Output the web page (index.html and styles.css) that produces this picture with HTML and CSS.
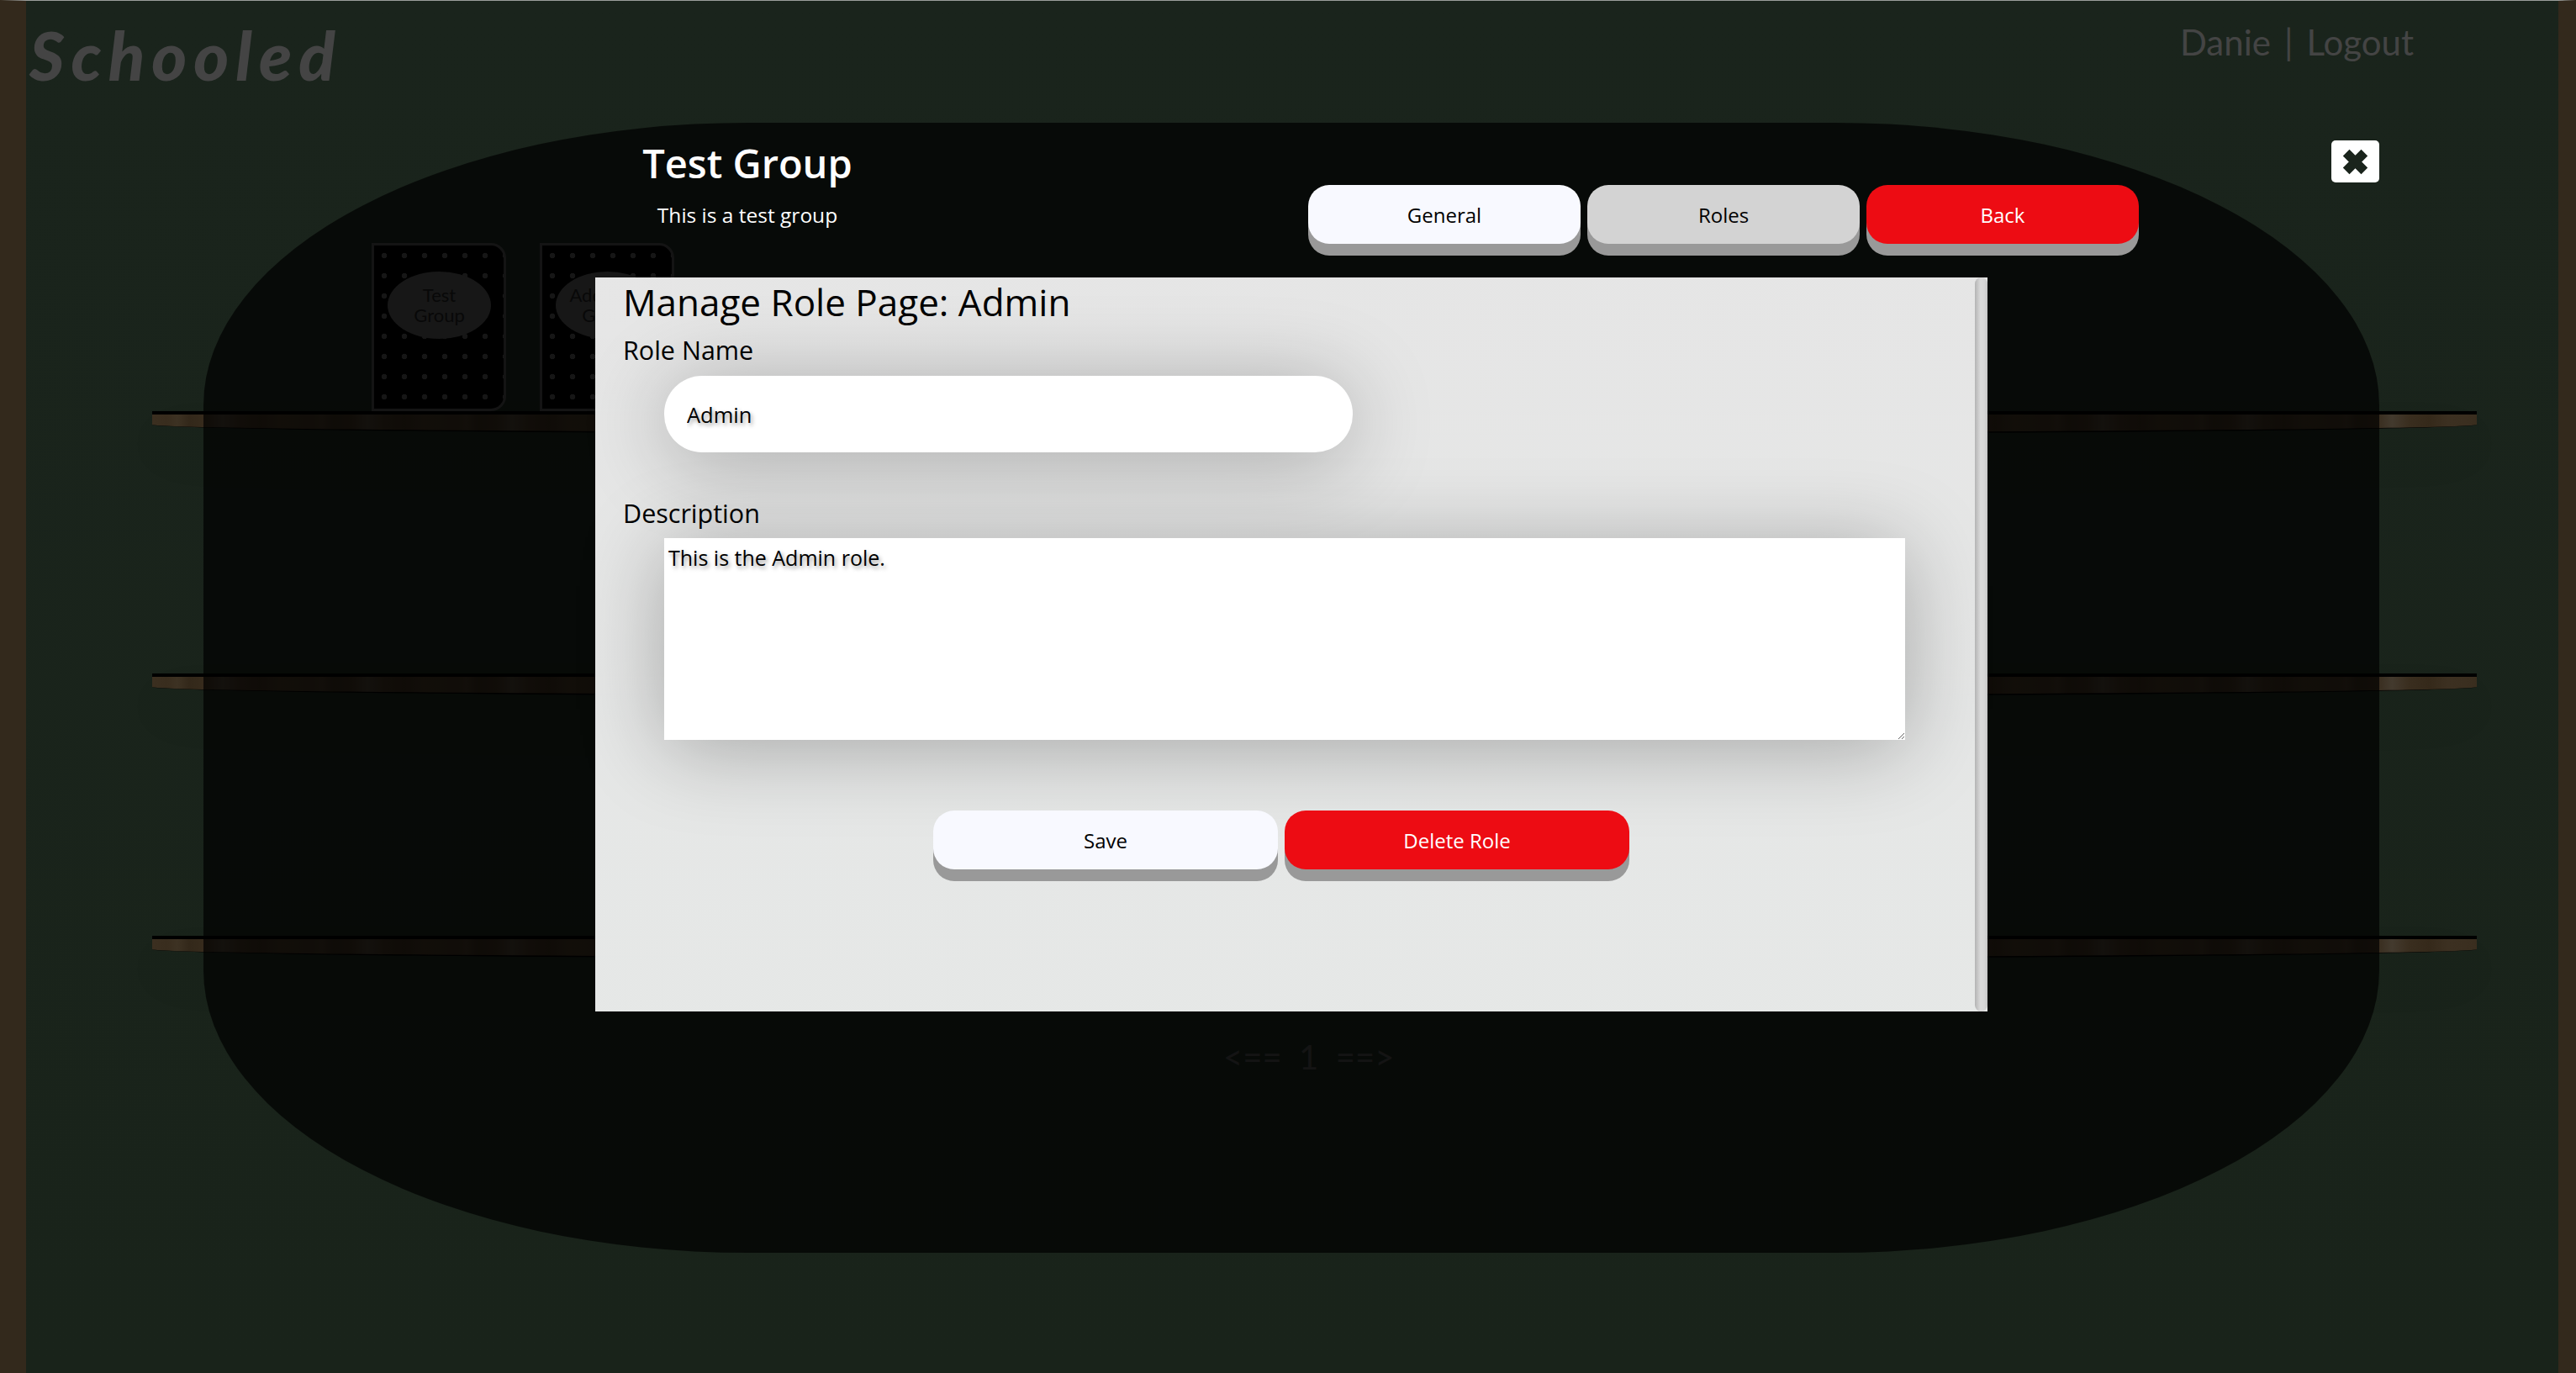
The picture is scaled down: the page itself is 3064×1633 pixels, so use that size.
FILE: index.html
```html
<!DOCTYPE html>
<html lang="en">

<head>
    <meta charset="UTF-8" />
    <meta name="viewport" content="width=device-width, initial-scale=1.0" />
    <title>Schooled - Manage Role</title>

    <link rel="stylesheet" href="styles.css">
</head>

<body>
    <!-- PAGE BEHIND THE DIALOG -->
    <div class="wall">
        <header class="top">
            <div class="logo">Schooled</div>
            <nav class="user">
                <span>Danie</span>
                <span class="bar">|</span>
                <span>Logout</span>
            </nav>
        </header>

        <div class="shelves">
            <div class="row">
                <div class="books">
                    <div class="book">
                        <div class="label">Test<br>Group</div>
                    </div>
                    <div class="book">
                        <div class="label">Add New<br>Group</div>
                    </div>
                </div>
                <div class="shelf"></div>
            </div>
            <div class="row">
                <div class="shelf"></div>
            </div>
            <div class="row">
                <div class="shelf"></div>
            </div>
        </div>

        <div class="pager">&lt;== &nbsp;1&nbsp; ==&gt;</div>
    </div>

    <!-- DIALOG -->
    <div class="panel">
        <div class="panel-head">
            <div class="group">
                <h2>Test Group</h2>
                <p>This is a test group</p>
            </div>

            <div class="tabs">
                <button class="btn light">General</button>
                <button class="btn grey">Roles</button>
                <button class="btn red">Back</button>
            </div>

            <button class="close" aria-label="Close">
                <svg viewBox="0 0 30 30" width="31" height="31">
                    <path d="M4.5 4.5 L25.5 25.5 M25.5 4.5 L4.5 25.5" />
                </svg>
            </button>
        </div>

        <div class="modal">
            <form class="content" action="">
                <h1>Manage Role Page: Admin</h1>

                <!-- NAME -->
                <label for="roleName">Role Name</label>
                <input class="field" type="text" id="roleName" value="Admin" />

                <!-- DESCRIPTION -->
                <label class="desc-label" for="roleDesc">Description</label>
                <textarea class="area" id="roleDesc">This is the Admin role.</textarea>

                <!-- BUTTONS -->
                <div class="actions">
                    <button type="button" class="btn light wide">Save</button>
                    <button type="button" class="btn red wide">Delete Role</button>
                </div>
            </form>
            <div class="scroll"></div>
        </div>
    </div>
</body>

</html>
```

FILE: styles.css
```css
* {
    box-sizing: border-box;
}

body {
    margin: 0;
    font-family: "Open Sans", Arial, sans-serif;
    background: #1a241c;
    overflow: hidden;
}

/* page behind the dialog */
.wall {
    height: 1633px;
    border-top: 1px solid #9a9d9b;
    border-left: 31px solid #33291c;
    border-right: 21px solid #33291c;
    background: linear-gradient(#1a241c, #19231a);
    font-family: "Comic Sans MS", "Lato", sans-serif;
    color: #444;
}

.top {
    display: flex;
    justify-content: space-between;
    align-items: flex-start;
    height: 288px;
}

.logo {
    font-size: 80px;
    font-weight: 900;
    font-style: italic;
    letter-spacing: 8px;
    line-height: 100px;
    margin: 14px 0 0 4px;
}

.user {
    display: flex;
    gap: 16px;
    font-size: 42px;
    line-height: 50px;
    margin: 24px 172px 0 0;
}

.shelves {
    display: flex;
    flex-direction: column;
    gap: 114px;
    padding: 0 97px 0 150px;
}

.row {
    height: 198px;
    position: relative;
}

.row:first-child {
    height: 228px;
}

.books {
    display: flex;
    gap: 40px;
    padding-left: 261px;
}

.book {
    width: 160px;
    height: 200px;
    padding-top: 31px;
    border: 3px solid #444;
    border-radius: 0 18px 18px 0;
    background: #000 radial-gradient(circle, #4a4a4a 3px, transparent 3.6px) 0 0 / 24px 24px;
}

.label {
    width: 123px;
    height: 80px;
    margin-left: 16px;
    border-radius: 50%;
    background: #4e4e4e;
    color: #1c1c1c;
    font-size: 22px;
    line-height: 24px;
    text-align: center;
    padding-top: 16px;
}

.shelf {
    height: 28px;
    border-top: 4px solid #000;
    border-bottom: 2px solid #000;
    border-radius: 0 0 50% 50% / 0 0 12px 12px;
    background: repeating-linear-gradient(90deg, #3b2f20 0, #392d1e 18px, #3d3223 30px, #33281a 44px, #382c1d 66px, #433a2e 84px, #3a2e1f 104px, #35291a 128px, #3c3021 150px, #3b2f20 172px);
    box-shadow: 0 30px 60px rgba(0, 0, 0, .06);
}

.row .shelf {
    position: absolute;
    left: 0;
    right: 0;
    bottom: 0;
}

.pager {
    margin-top: 91px;
    padding-left: 1424px;
    font-size: 40px;
    line-height: 50px;
}

/* dialog over the page */
.panel {
    position: absolute;
    left: 242px;
    top: 146px;
    width: 2588px;
    height: 1344px;
    border-radius: 25%;
    background: rgba(0, 0, 0, .7);
}

.panel-head {
    display: flex;
    align-items: flex-start;
    height: 184px;
    padding-left: 466px;
}

.group {
    width: 362px;
    text-align: center;
    color: #fff;
    padding-top: 18px;
}

.group h2 {
    margin: 0;
    font-size: 47px;
    font-weight: 600;
    line-height: 60px;
}

.group p {
    margin: 12px 0 0;
    font-size: 24.5px;
    line-height: 40px;
}

.tabs {
    display: flex;
    gap: 8px;
    margin: 74px 0 0 486px;
}

.btn {
    width: 324px;
    height: 70px;
    border: 0;
    border-radius: 25px;
    box-shadow: 0 14px 0 #999;
    font-family: inherit;
    font-size: 24px;
    color: #000;
}

.btn.wide {
    width: 410px;
}

.light {
    background: #f8f9ff;
}

.grey {
    background: #d3d3d3;
}

.btn.red {
    background: #ed0c13;
    color: #fff;
}

.close {
    margin: 21px 0 0 auto;
    width: 57px;
    height: 50px;
    padding: 0;
    border: 0;
    border-radius: 5px;
    background: #fff;
    display: flex;
    align-items: center;
    justify-content: center;
}

.close svg {
    fill: none;
    stroke: #1a241c;
    stroke-width: 10.5;
}

.modal {
    display: flex;
    width: 1656px;
    height: 873px;
    margin-left: 466px;
    background: linear-gradient(rgba(234, 234, 234, .98), rgba(234, 236, 235, .98));
}

.content {
    flex: 1;
    display: flex;
    flex-direction: column;
    align-items: flex-start;
    padding-left: 33px;
    color: #000;
}

.content h1 {
    margin: 0;
    font-size: 44px;
    font-weight: 500;
    line-height: 58px;
}

.content label {
    font-size: 30.5px;
    font-weight: 500;
    line-height: 40px;
    margin-top: 8px;
}

.content .desc-label {
    margin-top: 52px;
}

.field {
    width: 819px;
    height: 91px;
    margin: 11px 0 0 49px;
    padding: 0 27px;
    border: 0;
    border-radius: 45px;
    background: #fff;
    font-family: inherit;
    font-size: 25.5px;
    font-weight: 500;
    color: #000;
    text-shadow: 2px 3px 5px rgba(0, 0, 0, .4);
    box-shadow: 0 10px 100px rgba(0, 0, 0, .28);
}

.area {
    width: 1476px;
    height: 240px;
    margin: 10px 0 0 49px;
    padding: 5px 5px;
    border: 0;
    border-radius: 0;
    background: #fff;
    font-family: inherit;
    font-size: 25px;
    font-weight: 500;
    line-height: 36px;
    color: #000;
    text-shadow: 2px 3px 5px rgba(0, 0, 0, .4);
    box-shadow: 0 10px 100px rgba(0, 0, 0, .28);
}

.actions {
    display: flex;
    gap: 8px;
    margin: 84px 0 0 369px;
}

.scroll {
    width: 15px;
    border-radius: 8px;
    background: linear-gradient(90deg, #b4b4b4, #dadada 45%, #d6d6d6 75%, #c6c6c6);
}
```
